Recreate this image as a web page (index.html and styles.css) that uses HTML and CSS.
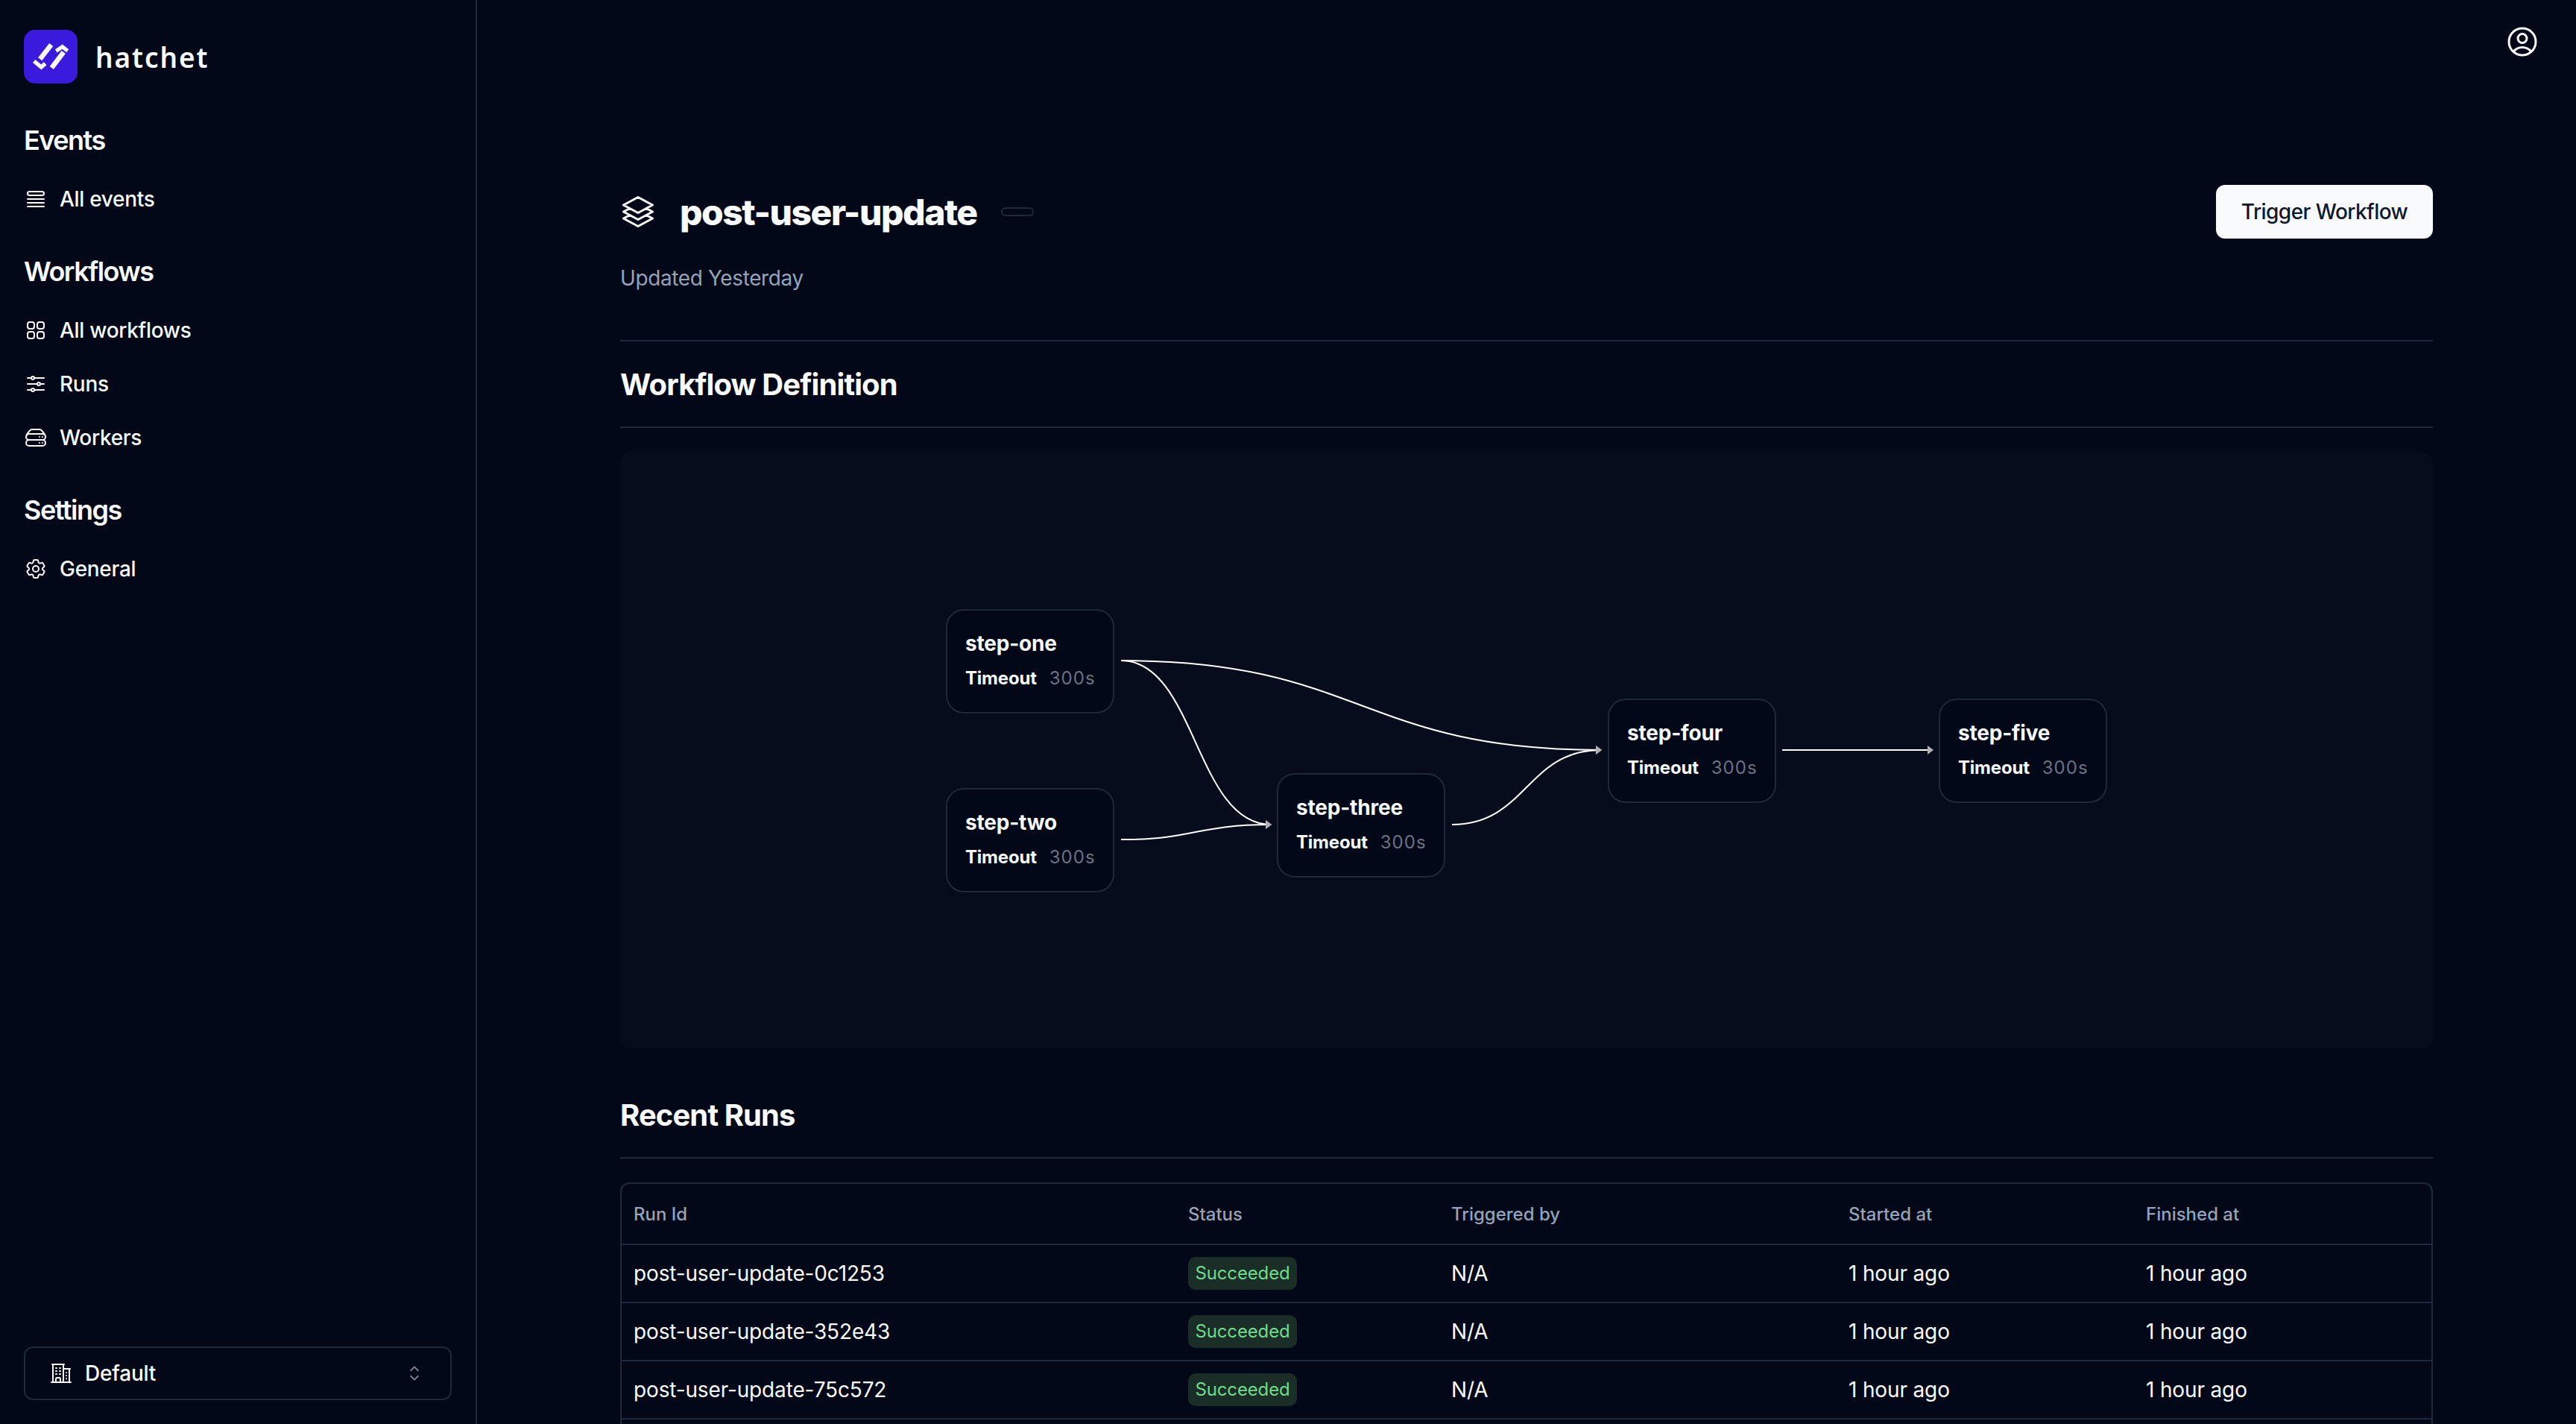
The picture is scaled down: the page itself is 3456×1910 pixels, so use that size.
FILE: index.html
```html
<!DOCTYPE html>
<html>
<head>
    <title>Hatchet</title>
    <meta charset="utf-8">
    <link rel="stylesheet" href="styles.css">
</head>
<body>
    <div class="app">
        <aside class="sidebar">
            <div class="brand">
                <svg class="brand-logo" viewBox="0 0 72 72">
                    <rect width="72" height="72" rx="15" fill="#3a1adc"/>
                    <path class="logo-bar" stroke-width="6.5" d="M36.7 20 L21.7 39.3"/>
                    <path class="logo-bar" stroke-width="6.5" d="M53.3 30 L37.3 51"/>
                    <path class="logo-bar" stroke-width="5.5" d="M13.7 42 L23.3 50 L28.7 45.3"/>
                    <path class="logo-bar" stroke-width="5" d="M43.3 28.3 L51.7 22.7 L58.7 28.3"/>
                </svg>
                <span class="brand-name">hatchet</span>
            </div>
            <nav class="nav">
                <h2 class="nav-title">Events</h2>
                <a class="nav-item" href="#">
                    <svg class="icon" viewBox="0 0 24 24"><path d="M3.75 12h16.5m-16.5 3.75h16.5M3.75 19.5h16.5M5.625 4.5h12.75a1.875 1.875 0 010 3.75H5.625a1.875 1.875 0 010-3.75z"/></svg>
                    All events
                </a>
                <h2 class="nav-title nav-title-next">Workflows</h2>
                <a class="nav-item" href="#">
                    <svg class="icon" viewBox="0 0 24 24"><path d="M3.75 6A2.25 2.25 0 016 3.75h2.25A2.25 2.25 0 0110.5 6v2.25a2.25 2.25 0 01-2.25 2.25H6a2.25 2.25 0 01-2.25-2.25V6zM3.75 15.75A2.25 2.25 0 016 13.5h2.25a2.25 2.25 0 012.25 2.25V18a2.25 2.25 0 01-2.25 2.25H6A2.25 2.25 0 013.75 18v-2.25zM13.5 6a2.25 2.25 0 012.25-2.25H18A2.25 2.25 0 0120.25 6v2.25A2.25 2.25 0 0118 10.5h-2.25a2.25 2.25 0 01-2.25-2.25V6zM13.5 15.75a2.25 2.25 0 012.25-2.25H18a2.25 2.25 0 012.25 2.25V18A2.25 2.25 0 0118 20.25h-2.25A2.25 2.25 0 0113.5 18v-2.25z"/></svg>
                    All workflows
                </a>
                <a class="nav-item" href="#">
                    <svg class="icon" viewBox="0 0 24 24"><path d="M10.5 6h9.75M10.5 6a1.5 1.5 0 11-3 0m3 0a1.5 1.5 0 10-3 0M3.75 6H7.5m3 12h9.75m-9.75 0a1.5 1.5 0 01-3 0m3 0a1.5 1.5 0 00-3 0m-3.75 0H7.5m9-6h3.75m-3.75 0a1.5 1.5 0 01-3 0m3 0a1.5 1.5 0 00-3 0m-9.75 0h9.75"/></svg>
                    Runs
                </a>
                <a class="nav-item" href="#">
                    <svg class="icon" viewBox="0 0 24 24"><path d="M5.25 14.25h13.5m-13.5 0a3 3 0 01-3-3m3 3a3 3 0 100 6h13.5a3 3 0 100-6m-16.5-3a3 3 0 013-3h13.5a3 3 0 013 3m-19.5 0a4.5 4.5 0 01.9-2.7L5.737 5.1a3.375 3.375 0 012.7-1.35h7.126c1.062 0 2.062.5 2.7 1.35l2.587 3.45a4.5 4.5 0 01.9 2.7m0 0a3 3 0 01-3 3m0 3h.008v.008h-.008v-.008zm0-6h.008v.008h-.008v-.008zm-3 6h.008v.008h-.008v-.008zm0-6h.008v.008h-.008v-.008z"/></svg>
                    Workers
                </a>
                <h2 class="nav-title nav-title-next">Settings</h2>
                <a class="nav-item" href="#">
                    <svg class="icon" viewBox="0 0 24 24"><path d="M9.594 3.94c.09-.542.56-.94 1.11-.94h2.593c.55 0 1.02.398 1.11.94l.213 1.281c.063.374.313.686.645.87.074.04.147.083.22.127.324.196.72.257 1.075.124l1.217-.456a1.125 1.125 0 011.37.49l1.296 2.247a1.125 1.125 0 01-.26 1.431l-1.003.827c-.293.24-.438.613-.431.992a6.759 6.759 0 010 .255c-.007.378.138.75.43.99l1.005.828c.424.35.534.954.26 1.43l-1.298 2.247a1.125 1.125 0 01-1.369.491l-1.217-.456c-.355-.133-.75-.072-1.076.124a6.57 6.57 0 01-.22.128c-.331.183-.581.495-.644.869l-.213 1.28c-.09.543-.56.941-1.11.941h-2.594c-.55 0-1.02-.398-1.11-.94l-.213-1.281c-.062-.374-.312-.686-.644-.87a6.52 6.52 0 01-.22-.127c-.325-.196-.72-.257-1.076-.124l-1.217.456a1.125 1.125 0 01-1.369-.49l-1.297-2.247a1.125 1.125 0 01.26-1.431l1.004-.827c.292-.24.437-.613.43-.992a6.932 6.932 0 010-.255c.007-.378-.138-.75-.43-.99l-1.004-.828a1.125 1.125 0 01-.26-1.43l1.297-2.247a1.125 1.125 0 011.37-.491l1.216.456c.356.133.751.072 1.076-.124.072-.044.146-.087.22-.128.332-.183.582-.495.644-.869l.214-1.281z"/><path d="M15 12a3 3 0 11-6 0 3 3 0 016 0z"/></svg>
                    General
                </a>
            </nav>
            <button class="tenant" type="button">
                <svg class="icon" viewBox="0 0 24 24"><path d="M2.25 21h19.5m-18-18v18m10.5-18v18m6-13.5V21M6.75 6.75h.75m-.75 3h.75m-.75 3h.75m3-6h.75m-.75 3h.75m-.75 3h.75M6.75 21v-3.375c0-.621.504-1.125 1.125-1.125h2.25c.621 0 1.125.504 1.125 1.125V21M3 3h12m-.75 4.5H21m-3.75 3.75h.008v.008h-.008v-.008zm0 3h.008v.008h-.008v-.008zm0 3h.008v.008h-.008v-.008z"/></svg>
                <span class="tenant-name">Default</span>
                <svg class="caret" viewBox="0 0 15 15"><path d="M4.93179 5.43179C4.75605 5.60753 4.75605 5.89245 4.93179 6.06819C5.10753 6.24392 5.39245 6.24392 5.56819 6.06819L7.49999 4.13638L9.43179 6.06819C9.60753 6.24392 9.89245 6.24392 10.0682 6.06819C10.2439 5.89245 10.2439 5.60753 10.0682 5.43179L7.81819 3.18179C7.73379 3.0974 7.61933 3.04999 7.49999 3.04999C7.38064 3.04999 7.26618 3.0974 7.18179 3.18179L4.93179 5.43179ZM10.0682 9.56819C10.2439 9.39245 10.2439 9.10753 10.0682 8.93179C9.89245 8.75606 9.60753 8.75606 9.43179 8.93179L7.49999 10.8636L5.56819 8.93179C5.39245 8.75606 5.10753 8.75606 4.93179 8.93179C4.75605 9.10753 4.75605 9.39245 4.93179 9.56819L7.18179 11.8182C7.26618 11.9026 7.38064 11.95 7.49999 11.95C7.61933 11.95 7.73379 11.9026 7.81819 11.8182L10.0682 9.56819Z"/></svg>
            </button>
        </aside>

        <main class="main">
            <div class="topbar">
                <svg class="user-icon" viewBox="0 0 24 24"><path d="M17.982 18.725A7.488 7.488 0 0012 15.75a7.488 7.488 0 00-5.982 2.975m11.964 0a9 9 0 10-11.963 0m11.963 0A8.966 8.966 0 0112 21a8.966 8.966 0 01-5.982-2.275M15 9.75a3 3 0 11-6 0 3 3 0 016 0z"/></svg>
            </div>
            <div class="content">
                <div class="page-head">
                    <div class="page-title">
                        <svg class="title-icon" viewBox="0 0 24 24"><path d="M6.429 9.75L2.25 12l4.179 2.25m0-4.5l5.571 3 5.571-3m-11.142 0L2.25 7.5 12 2.25l9.75 5.25-4.179 2.25m0 0L21.75 12l-4.179 2.25m0 0l4.179 2.25L12 21.75 2.25 16.5l4.179-2.25m11.142 0l-5.571 3-5.571-3"/></svg>
                        <h1 class="title">post-user-update</h1>
                        <span class="version"></span>
                    </div>
                    <button class="trigger" type="button">Trigger Workflow</button>
                </div>
                <p class="updated">Updated Yesterday</p>
                <hr class="rule rule-top">
                <h3 class="section-title">Workflow Definition</h3>
                <hr class="rule rule-section">

                <div class="canvas">
                    <svg class="edges" viewBox="0 0 2432 800">
                        <defs>
                            <marker id="arrow" markerWidth="8" markerHeight="12" refX="7" refY="6" orient="auto" markerUnits="userSpaceOnUse">
                                <path d="M0 0 L8 6 L0 12 Z" fill="#b1b1b7"/>
                            </marker>
                        </defs>
                        <path class="edge" marker-end="url(#arrow)" d="M672 280 C772 280 772 500 873 500"/>
                        <path class="edge" marker-end="url(#arrow)" d="M672 280 C994 280 994 400 1316 400"/>
                        <path class="edge" marker-end="url(#arrow)" d="M672 520 C772 520 772 500 873 500"/>
                        <path class="edge" marker-end="url(#arrow)" d="M1116 500 C1216 500 1216 400 1316 400"/>
                        <path class="edge" marker-end="url(#arrow)" d="M1559 400 L1761 400"/>
                    </svg>
                    <div class="node node-one">
                        <div class="node-name">step-one</div>
                        <div class="node-meta"><b>Timeout</b><span>300s</span></div>
                    </div>
                    <div class="node node-two">
                        <div class="node-name">step-two</div>
                        <div class="node-meta"><b>Timeout</b><span>300s</span></div>
                    </div>
                    <div class="node node-three">
                        <div class="node-name">step-three</div>
                        <div class="node-meta"><b>Timeout</b><span>300s</span></div>
                    </div>
                    <div class="node node-four">
                        <div class="node-name">step-four</div>
                        <div class="node-meta"><b>Timeout</b><span>300s</span></div>
                    </div>
                    <div class="node node-five">
                        <div class="node-name">step-five</div>
                        <div class="node-meta"><b>Timeout</b><span>300s</span></div>
                    </div>
                </div>

                <h3 class="section-title section-runs">Recent Runs</h3>
                <hr class="rule rule-runs">

                <div class="table-wrap">
                    <table class="runs">
                        <colgroup>
                            <col class="col-id"><col class="col-status"><col class="col-by"><col class="col-start"><col class="col-end">
                        </colgroup>
                        <thead>
                            <tr><th>Run Id</th><th>Status</th><th>Triggered by</th><th>Started at</th><th>Finished at</th></tr>
                        </thead>
                        <tbody>
                            <tr>
                                <td>post-user-update-0c1253</td>
                                <td><span class="badge">Succeeded</span></td>
                                <td>N/A</td><td>1 hour ago</td><td>1 hour ago</td>
                            </tr>
                            <tr>
                                <td>post-user-update-352e43</td>
                                <td><span class="badge">Succeeded</span></td>
                                <td>N/A</td><td>1 hour ago</td><td>1 hour ago</td>
                            </tr>
                            <tr>
                                <td>post-user-update-75c572</td>
                                <td><span class="badge">Succeeded</span></td>
                                <td>N/A</td><td>1 hour ago</td><td>1 hour ago</td>
                            </tr>
                            <tr class="row-empty"><td colspan="5"></td></tr>
                        </tbody>
                    </table>
                </div>
            </div>
        </main>
    </div>
</body>
</html>
```

FILE: styles.css
```css
* {
    box-sizing: border-box;
}
html, body {
    margin: 0;
    height: 100%;
    overflow: hidden;
}
body {
    background: #020817;
    color: #f8fafc;
    font-family: Inter, "Liberation Sans", sans-serif;
    font-size: 28px;
}
.app {
    display: flex;
    height: 100vh;
}

/* sidebar */
.sidebar {
    width: 640px;
    flex: none;
    display: flex;
    flex-direction: column;
    padding: 40px 32px 32px;
    border-right: 2px solid #1e293b;
}
.brand {
    display: flex;
    align-items: center;
    gap: 24px;
    height: 72px;
}
.brand-logo {
    width: 72px;
    height: 72px;
    flex: none;
}
.logo-bar {
    fill: none;
    stroke: #f8fafc;
}
.brand-name {
    font-family: "Noto Sans", sans-serif;
    font-size: 37px;
    font-weight: 600;
    letter-spacing: 1.9px;
}
.nav {
    flex: 1;
    margin-top: 50px;
}
.nav-title {
    margin: 0 0 17px;
    font-size: 36px;
    line-height: 52px;
    font-weight: 600;
    letter-spacing: -1.5px;
}
.nav-title-next {
    margin-top: 35px;
}
.nav-item {
    display: flex;
    align-items: center;
    gap: 16px;
    height: 72px;
    color: #f8fafc;
    font-weight: 500;
    letter-spacing: -0.3px;
    text-decoration: none;
}
.icon {
    width: 32px;
    height: 32px;
    flex: none;
    fill: none;
    stroke: currentColor;
    stroke-width: 1.5;
    stroke-linecap: round;
    stroke-linejoin: round;
}
.tenant {
    display: flex;
    align-items: center;
    gap: 16px;
    width: 574px;
    height: 72px;
    padding: 0 32px;
    background: transparent;
    border: 2px solid #1e293b;
    border-radius: 12px;
    color: #f8fafc;
    font: 500 28px Inter, "Liberation Sans", sans-serif;
    letter-spacing: -0.2px;
}
.tenant-name {
    flex: 1;
    text-align: left;
}
.caret {
    width: 32px;
    height: 32px;
    flex: none;
    fill: currentColor;
    opacity: .5;
}

/* main */
.main {
    flex: 1;
    min-width: 0;
    overflow: hidden;
}
.topbar {
    display: flex;
    justify-content: flex-end;
    align-items: center;
    height: 112px;
    padding-right: 48px;
}
.user-icon {
    width: 48px;
    height: 48px;
    fill: none;
    stroke: #f8fafc;
    stroke-width: 1.5;
    stroke-linecap: round;
    stroke-linejoin: round;
}
.content {
    padding: 136px 192px 0;
}
.page-head {
    display: flex;
    justify-content: space-between;
    align-items: center;
    height: 72px;
}
.page-title {
    display: flex;
    align-items: center;
}
.title-icon {
    width: 48px;
    height: 48px;
    margin-right: 32px;
    fill: none;
    stroke: #f8fafc;
    stroke-width: 1.5;
    stroke-linecap: round;
    stroke-linejoin: round;
}
.title {
    margin: 0;
    font-size: 48px;
    font-weight: 800;
    letter-spacing: -1.5px;
}
.version {
    width: 44px;
    height: 12px;
    margin-left: 32px;
    border: 2px solid #1e293b;
    border-radius: 8px;
}
.trigger {
    width: 291px;
    height: 72px;
    background: #f8fafc;
    border: none;
    border-radius: 12px;
    color: #0f172a;
    font: 500 28px Inter, "Liberation Sans", sans-serif;
    letter-spacing: -0.55px;
}
.updated {
    margin: 33px 0 0;
    color: #94a3b8;
    line-height: 40px;
    letter-spacing: -0.4px;
}
.rule {
    height: 2px;
    margin: 0;
    border: none;
    background: #1e293b;
}
.rule-top {
    margin-top: 63px;
}
.section-title {
    margin: 30px 0 0;
    font-size: 40px;
    line-height: 56px;
    font-weight: 700;
    letter-spacing: -0.9px;
}
.rule-section {
    margin-top: 28px;
}
.canvas {
    position: relative;
    height: 800px;
    margin-top: 32px;
    background: #060c1b;
    border-radius: 16px;
}
.edges {
    position: absolute;
    left: 0;
    top: 0;
    width: 100%;
    height: 100%;
}
.edge {
    fill: none;
    stroke: #fff;
    stroke-width: 2;
}
.node {
    position: absolute;
    width: 226px;
    height: 140px;
    padding: 24px;
    background: #020817;
    border: 2px solid #1e293b;
    border-radius: 24px;
}
.node-one { left: 437px; top: 211px; }
.node-two { left: 437px; top: 451px; }
.node-three { left: 881px; top: 431px; }
.node-four { left: 1325px; top: 331px; }
.node-five { left: 1769px; top: 331px; }
.node-name {
    font-size: 28px;
    line-height: 40px;
    font-weight: 700;
    letter-spacing: -0.2px;
}
.node-meta {
    display: flex;
    gap: 17px;
    margin-top: 9px;
    font-size: 24px;
    line-height: 36px;
}
.node-meta b {
    font-weight: 700;
    letter-spacing: -0.2px;
}
.node-meta span {
    color: #6b7280;
    letter-spacing: 1px;
}
.section-runs {
    margin-top: 62px;
}
.rule-runs {
    margin-top: 28px;
}
.table-wrap {
    margin-top: 32px;
    border: 2px solid #1e293b;
    border-radius: 12px;
    overflow: hidden;
}
.runs {
    width: 100%;
    border-collapse: collapse;
    table-layout: fixed;
}
.col-id { width: 744px; }
.col-status { width: 353px; }
.col-by { width: 533px; }
.col-start { width: 399px; }
.runs th {
    height: 81px;
    padding: 0 16px;
    text-align: left;
    color: #94a3b8;
    font-size: 24px;
    font-weight: 500;
    border-bottom: 2px solid #1e293b;
}
.runs td {
    height: 78px;
    padding: 0 16px;
    letter-spacing: -0.15px;
    border-bottom: 2px solid #1e293b;
}
.badge {
    display: inline-block;
    width: 146px;
    height: 44px;
    border-radius: 10px;
    background: #1a2e27;
    color: #6fdc8c;
    font-size: 24px;
    line-height: 44px;
    text-align: center;
    vertical-align: middle;
}
```
